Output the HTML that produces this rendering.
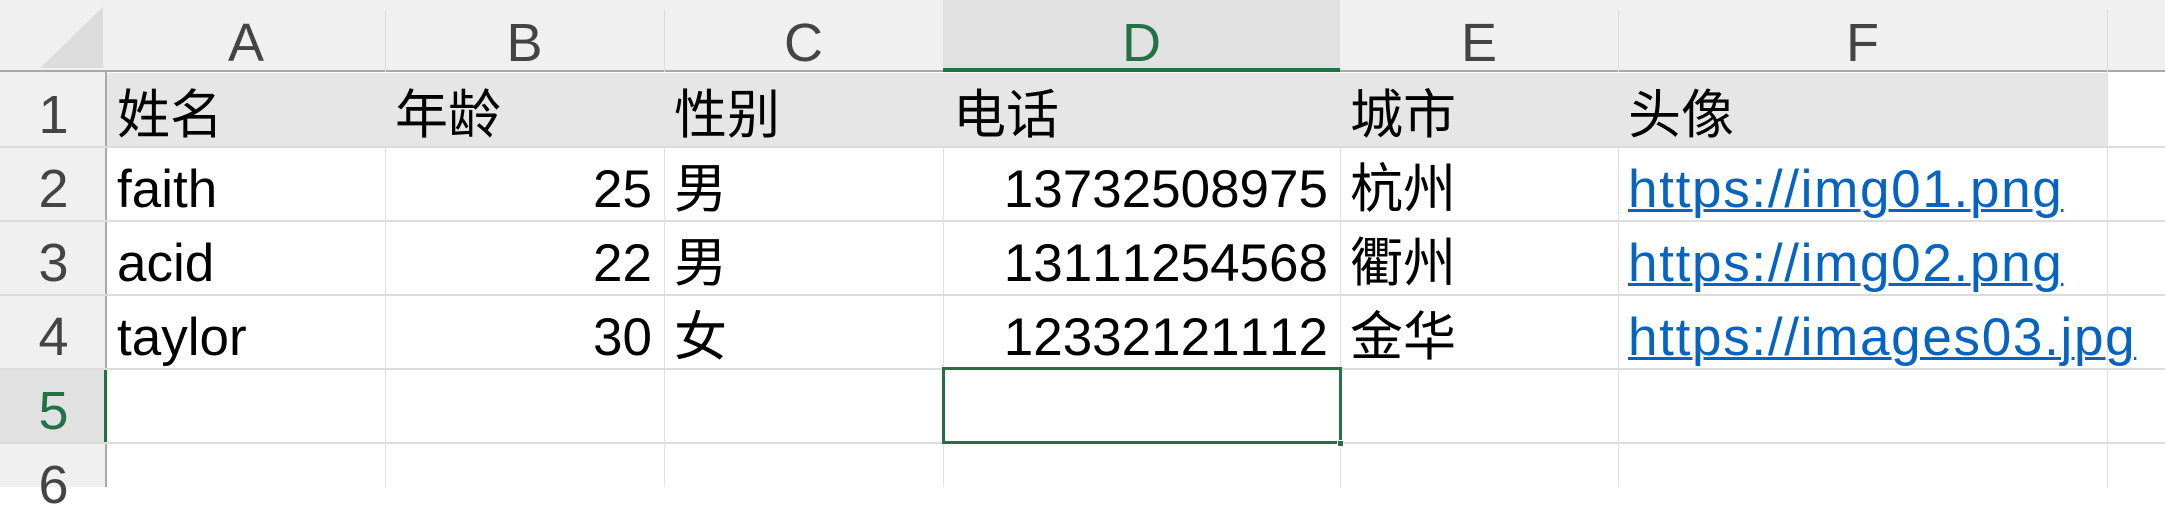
<!DOCTYPE html>
<html><head><meta charset="utf-8"><style>
body{margin:0;width:2165px;height:487px;overflow:hidden;background:#fff;position:relative;font-family:"Liberation Sans","Noto Sans CJK SC",sans-serif;font-kerning:none;}
div{position:absolute;box-sizing:border-box;}
.c{font-size:53px;line-height:73px;height:73px;padding-top:6px;color:#000;white-space:nowrap;}
.h{font-size:54px;color:#444;text-align:center;line-height:72px;height:72px;top:0;padding-top:7px}
.r{font-size:54px;color:#444;text-align:center;left:0;width:107px;}
a{color:#0563c1;text-decoration:underline;text-decoration-thickness:3px;letter-spacing:1.7px;}
</style></head><body>
<div style="left:0;top:0;width:2165px;height:72px;background:#f0f0f0;border-bottom:2px solid #a8a8a8"></div>
<div style="left:0;top:72px;width:107px;height:415px;background:#f0f0f0;border-right:2px solid #a8a8a8"></div>
<div style="left:943px;top:0;width:397px;height:72px;background:#e1e1e1;border-bottom:4px solid #217346"></div>
<div style="left:0;top:369px;width:107px;height:74px;background:#e1e1e1;border-right:3px solid #217346"></div>
<svg style="position:absolute;left:0;top:0" width="107" height="72"><polygon points="40,68 103,68 103,7" fill="#dcdcdc"/></svg>
<div style="left:107px;top:73px;width:2000px;height:74px;background:#e6e6e6"></div>
<div style="left:385px;top:10px;width:1px;height:62px;background:#dadada"></div>
<div style="left:664px;top:10px;width:1px;height:62px;background:#dadada"></div>
<div style="left:1618px;top:10px;width:1px;height:62px;background:#dadada"></div>
<div style="left:2107px;top:10px;width:1px;height:62px;background:#dadada"></div>
<div style="left:385px;top:147px;width:1px;height:340px;background:#e1e1e1"></div>
<div style="left:664px;top:147px;width:1px;height:340px;background:#e1e1e1"></div>
<div style="left:943px;top:147px;width:1px;height:340px;background:#e1e1e1"></div>
<div style="left:1340px;top:147px;width:1px;height:340px;background:#e1e1e1"></div>
<div style="left:1618px;top:147px;width:1px;height:340px;background:#e1e1e1"></div>
<div style="left:2107px;top:73px;width:1px;height:414px;background:#e1e1e1"></div>
<div style="left:0;top:146px;width:2165px;height:2px;background:#dcdcdc"></div>
<div style="left:0;top:220px;width:2165px;height:2px;background:#dcdcdc"></div>
<div style="left:0;top:294px;width:2165px;height:2px;background:#dcdcdc"></div>
<div style="left:0;top:368px;width:2165px;height:2px;background:#dcdcdc"></div>
<div style="left:0;top:442px;width:2165px;height:2px;background:#dcdcdc"></div>
<div class="h" style="left:107px;width:278px">A</div>
<div class="h" style="left:385px;width:279px">B</div>
<div class="h" style="left:664px;width:279px">C</div>
<div class="h" style="left:943px;width:397px;color:#217346">D</div>
<div class="h" style="left:1340px;width:278px">E</div>
<div class="h" style="left:1618px;width:489px">F</div>
<div class="r c" style="top:73px;color:#444">1</div>
<div class="r c" style="top:147px;color:#444">2</div>
<div class="r c" style="top:221px;color:#444">3</div>
<div class="r c" style="top:295px;color:#444">4</div>
<div class="r c" style="top:369px;color:#217346">5</div>
<div class="r c" style="top:443px;color:#444">6</div>
<div class="c" style="top:73px;left:117px">姓名</div>
<div class="c" style="top:73px;left:395px">年龄</div>
<div class="c" style="top:73px;left:674px">性别</div>
<div class="c" style="top:73px;left:953px">电话</div>
<div class="c" style="top:73px;left:1350px">城市</div>
<div class="c" style="top:73px;left:1628px">头像</div>
<div class="c" style="top:147px;left:117px">faith</div>
<div class="c" style="top:147px;left:385px;width:267px;text-align:right">25</div>
<div class="c" style="top:147px;left:674px">男</div>
<div class="c" style="top:147px;left:943px;width:385px;text-align:right">13732508975</div>
<div class="c" style="top:147px;left:1350px">杭州</div>
<div class="c" style="top:147px;left:1628px"><a>https://img01.png</a></div>
<div class="c" style="top:221px;left:117px">acid</div>
<div class="c" style="top:221px;left:385px;width:267px;text-align:right">22</div>
<div class="c" style="top:221px;left:674px">男</div>
<div class="c" style="top:221px;left:943px;width:385px;text-align:right">13111254568</div>
<div class="c" style="top:221px;left:1350px">衢州</div>
<div class="c" style="top:221px;left:1628px"><a>https://img02.png</a></div>
<div class="c" style="top:295px;left:117px">taylor</div>
<div class="c" style="top:295px;left:385px;width:267px;text-align:right">30</div>
<div class="c" style="top:295px;left:674px">女</div>
<div class="c" style="top:295px;left:943px;width:385px;text-align:right">12332121112</div>
<div class="c" style="top:295px;left:1350px">金华</div>
<div class="c" style="top:295px;left:1628px"><a>https://images03.jpg</a></div>
<div style="left:942px;top:367px;width:400px;height:77px;border:3px solid #217346"></div>
<div style="left:1337px;top:440px;width:7px;height:7px;background:#217346;border:1px solid #fff"></div>
</body></html>
